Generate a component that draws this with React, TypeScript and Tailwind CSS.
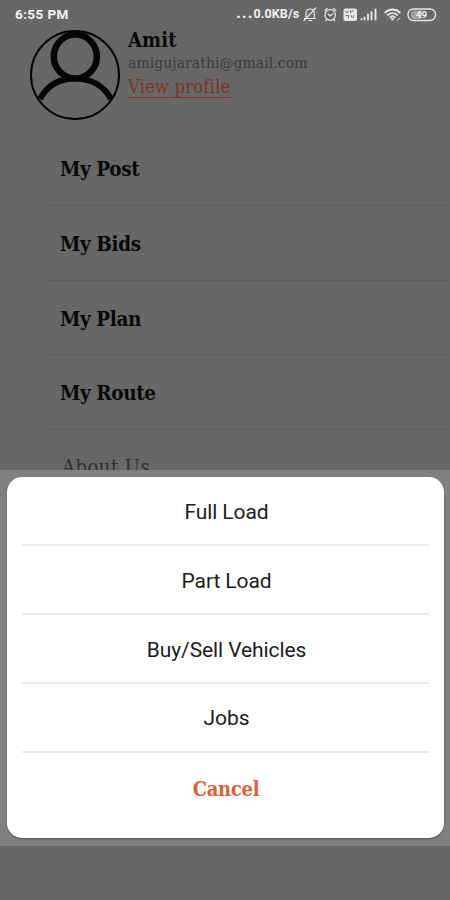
import React from "react";

const slab = "font-['DejaVu_Serif_Condensed','DejaVu_Serif',serif] [font-stretch:condensed]";

function StatusBar() {
  return (
    <div className="flex h-[29px] items-center pl-[15px] font-[Roboto,sans-serif] text-white">
      <span className="w-[221px] pt-px text-[13.5px] font-bold leading-none tracking-[0.4px] text-[#f4f4f4]">6:55 PM</span>
      <span className="w-[67px] whitespace-nowrap pb-[2px] text-[12.5px] font-bold leading-none tracking-[0.1px] text-[#f0f0f0]"><span className="text-[17px] leading-[12px] tracking-[0.9px]">...</span>0.0KB/s</span>
      <svg className="h-[22px] w-[147px]" viewBox="303 4 147 22" fill="none" stroke="#e6e6e6" strokeWidth="1.2" strokeLinecap="round" strokeLinejoin="round">
        <path d="M304.500 18.500H315.500M306 18V13.500C306 10.500 307.800 9 310.200 9S314.300 10.500 314.300 13.500V18M308.800 20.500H311.800M304 20.500L315.800 8" />
        <circle cx="330.200" cy="15" r="5.300" />
        <path d="M324.700 10.500L327.200 8.300M335.700 10.500L333.200 8.300M328 14L330.200 16L333 13.700M326.500 19.500L325.700 20.800M334 19.500L334.800 20.800" />
        <rect x="343.500" y="8.500" width="13.500" height="12.500" rx="2" fill="#e6e6e6" stroke="none" />
        <path d="M345.500 11L347 13L348.500 11M350.500 13V11H353M346 15.500H348.500V18M351 15.500L352.300 18L354 15.500" stroke="#777777" strokeWidth="1" />
        <path d="M361.500 19V19.500M364.500 17.500V19.500M368 14.500V19.500M371.500 12V19.500M375.500 9.500V19.500" strokeWidth="1.900" />
        <path d="M385.200 12.500C389.300 8.500 395.700 8.500 399.800 12.500M387.800 15C390.600 12.400 394.400 12.400 397.200 15M390.200 17.300C391.600 16 393.400 16 394.800 17.300" strokeWidth="1.800" />
        <circle cx="392.500" cy="19.200" r="1.300" fill="#e6e6e6" stroke="none" />
        <path d="M397.500 20.300L400 18" strokeWidth="1" />
        <rect x="408" y="9" width="27.500" height="11.500" rx="5.500" strokeWidth="1.400" />
        <path d="M415 10.500H422V19H415C409 19 409 10.500 415 10.500Z" fill="#a0a0a0" stroke="none" />
        <text x="421.500" y="18.400" textAnchor="middle" fill="#f5f5f5" stroke="none" fontSize="9.500" fontWeight="700" fontFamily="Roboto">49</text>
      </svg>
    </div>
  );
}

function Profile() {
  return (
    <div className="flex h-[102px] pl-[29px]">
      <svg className="h-[92px] w-[92px]" viewBox="29 29 92 92" fill="none" stroke="#050505">
        <circle cx="75" cy="75" r="44" strokeWidth="2" />
        <ellipse cx="75.300" cy="56.500" rx="21.500" ry="22" strokeWidth="6.500" />
        <path d="M40 99C47 86 59 78.500 75 78.500S104 86 111 99" strokeWidth="6" />
      </svg>
      <div className={`ml-[7px] flex flex-col items-start whitespace-nowrap ${slab}`}>
        <span className="h-[22px] text-[20px] font-bold leading-[22px] tracking-[0.1px] text-[#080808]">Amit</span>
        <span className="h-[24px] text-[15.5px] leading-[25px] tracking-[0.08px] text-[#3b3b3b]">amigujarathi@gmail.com</span>
        <span className="h-[23px] border-b border-[#7d3521] text-[18px] leading-[23px] tracking-[0.3px] text-[#7d3521]">View profile</span>
      </div>
    </div>
  );
}

function Menu() {
  return (
    <div className={`flex flex-col pl-[44px] pr-[2px] ${slab}`}>
      {["My Post", "My Bids", "My Plan", "My Route"].map((label) => (
        <div key={label} className="h-[74.800px] shrink-0 whitespace-nowrap border-b border-[#5f5f5f] pl-[16px] text-[20.500px] font-bold leading-[76.500px] tracking-[-0.4px] text-[#080808]">
          {label}
        </div>
      ))}
      <div className="h-[74px] shrink-0 pl-[18px] text-[20px] leading-[74px] tracking-[0.5px] text-[#303030]">About Us</div>
    </div>
  );
}

function ActionSheet() {
  return (
    <div className="h-[376px] bg-[#808080] pl-[7px] pr-[6px] pt-[7px]">
      <div className="flex h-[361px] flex-col rounded-[15px] bg-white px-[15px] pt-[0.6px] text-center shadow-[0_1px_2px_#505050]">
        {["Full Load", "Part Load", "Buy/Sell Vehicles", "Jobs"].map((label) => (
          <button key={label} className="h-[68.800px] border-b-2 border-[#ebebeb] pl-[2px] pt-[2px] font-[Roboto,sans-serif] text-[21px] leading-[64px] tracking-[-0.1px] text-[#1c1c1c]">
            {label}
          </button>
        ))}
        <button className={`h-[73px] pl-px text-[20px] font-bold leading-[73px] tracking-[-0.3px] text-[#dc6035] ${slab}`}>Cancel</button>
      </div>
    </div>
  );
}

export default function App() {
  return (
    <div className="h-[900px] w-[450px] overflow-hidden bg-[#676767]">
      <div className="h-[470px] overflow-hidden">
        <StatusBar />
        <Profile />
        <Menu />
      </div>
      <ActionSheet />
      <div className="h-[54px] bg-[#676767]" />
    </div>
  );
}
